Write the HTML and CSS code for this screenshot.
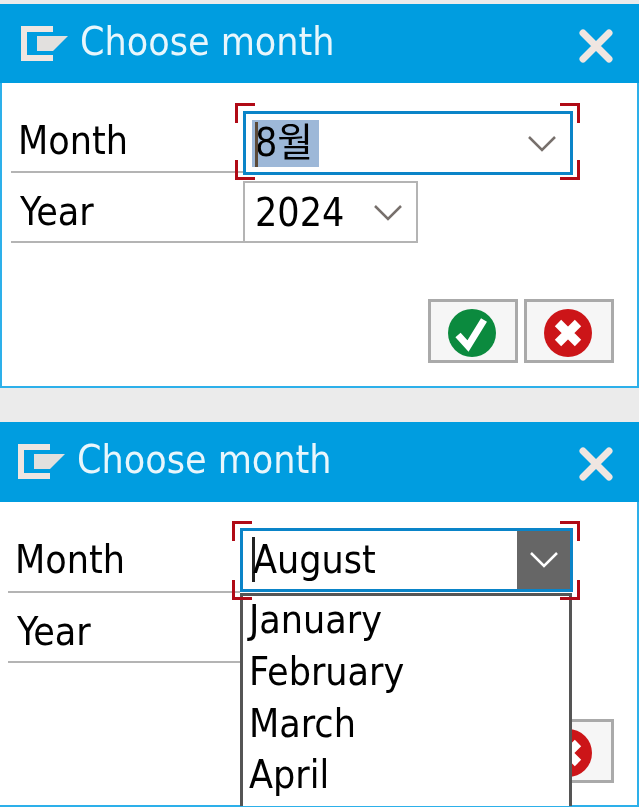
FILE: index.html
```html
<!DOCTYPE html>
<html lang="en">
<head>
    <meta charset="UTF-8"/>
    <title>Choose month</title>
    <link rel="stylesheet" href="styles.css">
</head>
<body>

<div class="dialog">
    <div class="title_bar">
        <svg class="title_icon" width="48" height="36" viewBox="0 0 48 36">
            <path d="M0 0H32V6H6V29H32V35H0Z" fill="#efe6e1"/>
            <path d="M16 10H47L32 25H16Z" fill="#e2e0de"/>
        </svg>
        <span class="title_text">Choose month</span>
        <svg class="close_icon" width="34" height="34" viewBox="0 0 34 34">
            <path d="M4 4L30 30M30 4L4 30" stroke="#efe6e1" stroke-width="7" stroke-linecap="round"/>
        </svg>
    </div>
    <div class="form">
        <div class="row row_month">
            <div class="row_label">Month</div>
            <div class="field field_focus">
                <span class="selected_text"><span class="caret"></span>8월</span>
                <svg class="chevron" width="28" height="16" viewBox="0 0 28 16">
                    <path d="M1 1L14 14L27 1" fill="none" stroke="#77706c" stroke-width="2.5"/>
                </svg>
                <i class="corner corner_tl"></i><i class="corner corner_tr"></i>
                <i class="corner corner_bl"></i><i class="corner corner_br"></i>
            </div>
        </div>
        <div class="row row_year">
            <div class="row_label row_label_year">Year</div>
            <div class="field field_year">
                <span>2024</span>
                <svg class="chevron" width="28" height="16" viewBox="0 0 28 16">
                    <path d="M1 1L14 14L27 1" fill="none" stroke="#77706c" stroke-width="2.5"/>
                </svg>
            </div>
        </div>
    </div>
    <div class="buttons">
        <div class="icon_button">
            <svg width="48" height="48" viewBox="0 0 48 48">
                <circle cx="24" cy="24" r="24" fill="#0b8a3e"/>
                <path d="M10 26L20 37L36 11" fill="none" stroke="#fff" stroke-width="7"/>
            </svg>
        </div>
        <div class="icon_button">
            <svg width="48" height="48" viewBox="0 0 48 48">
                <circle cx="24" cy="24" r="24" fill="#cc1518"/>
                <path d="M14 14L34 34M34 14L14 34" stroke="#fff" stroke-width="9"/>
            </svg>
        </div>
    </div>
</div>

<div class="dialog dialog_open">
    <div class="title_bar">
        <svg class="title_icon" width="48" height="36" viewBox="0 0 48 36">
            <path d="M0 0H32V6H6V29H32V35H0Z" fill="#efe6e1"/>
            <path d="M16 10H47L32 25H16Z" fill="#e2e0de"/>
        </svg>
        <span class="title_text">Choose month</span>
        <svg class="close_icon" width="34" height="34" viewBox="0 0 34 34">
            <path d="M4 4L30 30M30 4L4 30" stroke="#efe6e1" stroke-width="7" stroke-linecap="round"/>
        </svg>
    </div>
    <div class="form">
        <div class="row row_month">
            <div class="row_label">Month</div>
            <div class="field field_focus">
                <span class="caret caret_open"></span><span>August</span>
                <div class="arrow_box">
                    <svg width="28" height="16" viewBox="0 0 28 16">
                        <path d="M1 1L14 14L27 1" fill="none" stroke="#fff" stroke-width="2.5"/>
                    </svg>
                </div>
                <ul class="dropdown">
                    <li>January</li>
                    <li>February</li>
                    <li>March</li>
                    <li>April</li>
                </ul>
                <i class="corner corner_tl"></i><i class="corner corner_tr"></i>
                <i class="corner corner_bl"></i><i class="corner corner_br"></i>
            </div>
        </div>
        <div class="row row_year">
            <div class="row_label row_label_year">Year</div>
        </div>
    </div>
    <div class="buttons">
        <div class="icon_button"></div>
        <div class="icon_button">
            <svg width="48" height="48" viewBox="0 0 48 48">
                <circle cx="24" cy="24" r="24" fill="#cc1518"/>
                <path d="M14 14L34 34M34 14L14 34" stroke="#fff" stroke-width="9"/>
            </svg>
        </div>
    </div>
</div>

</body>
</html>
```

FILE: styles.css
```css
html, body {
    height: 807px;
    overflow: hidden;
}

body {
    margin: 0;
    background-color: #ebebeb;
    font-family: 'DejaVu Sans Condensed', 'Liberation Sans', 'Noto Sans CJK KR', sans-serif;
    font-size: 39px;
    color: #000;
}

.dialog {
    box-sizing: border-box;
    width: 639px;
    height: 384px;
    margin-top: 4px;
    background-color: #fff;
    border: 2px solid #2db0ea;
    border-top: none;
    filter: blur(0.6px);
}

.dialog_open {
    width: 642px;
    height: 385px;
    margin-top: 34px;
    margin-left: -3px;
}

.title_bar {
    display: flex;
    align-items: center;
    height: 79px;
    margin: 0 -2px;
    padding: 0 26px 0 21px;
    background-color: #009de0;
    color: #e8f6fc;
}

.dialog_open .title_bar {
    height: 80px;
}

.title_icon {
    margin-right: 11px;
}

.title_text {
    flex: 1;
    margin-top: -5px;
}

.close_icon {
    margin-top: 4px;
}

.form {
    padding: 22px 0 0 9px;
}

.dialog_open .form {
    padding-top: 23px;
}

.row {
    display: flex;
}

.row_month {
    height: 68px;
}

.row_year {
    height: 70px;
}

.row_label {
    box-sizing: border-box;
    width: 232px;
    padding: 13px 0 0 7px;
    border-bottom: 2px solid #b4b4b4;
}

.dialog_open .row_month .row_label {
    padding-top: 12px;
}

.row_label_year {
    padding-top: 16px;
    padding-left: 9px;
}

.field {
    position: relative;
    box-sizing: border-box;
    display: flex;
    align-items: center;
}

.field_focus {
    width: 330px;
    height: 64px;
    margin-top: 6px;
    padding-left: 6px;
    border: 3px solid #0a84c8;
}

.dialog_open .field_focus {
    width: 333px;
    margin-top: 3px;
    padding-left: 9px;
    padding-bottom: 2px;
}

.field_year {
    width: 175px;
    height: 62px;
    margin-top: 8px;
    padding-left: 10px;
    border: 2px solid #b4b4b4;
}

.selected_text {
    position: relative;
    display: block;
    width: 67px;
    height: 47px;
    line-height: 46px;
    padding-left: 3px;
    box-sizing: border-box;
    background-color: #9db8d8;
    font-family: 'DejaVu Sans Condensed', 'Noto Sans CJK KR', sans-serif;
}

.caret {
    position: absolute;
    left: 3px;
    top: 2px;
    width: 3px;
    height: 45px;
    background-color: #5c4a38;
}

.caret_open {
    position: static;
    margin-right: -2px;
    background-color: #222;
    flex-shrink: 0;
}

.chevron {
    position: absolute;
    right: 14px;
    top: 22px;
}

.arrow_box {
    display: flex;
    align-items: center;
    justify-content: center;
    position: absolute;
    top: 0;
    right: 0;
    width: 53px;
    height: 100%;
    background-color: #666;
}

.dropdown {
    position: absolute;
    left: -3px;
    top: 62px;
    box-sizing: border-box;
    width: 332px;
    height: 213px;
    margin: 0;
    padding: 0 0 0 6px;
    list-style: none;
    background-color: #fff;
    border: 3px solid #555;
    border-bottom: none;
}

.dropdown li {
    height: 51.8px;
    line-height: 47.5px;
}

.corner {
    position: absolute;
    width: 20px;
    height: 20px;
    box-sizing: border-box;
    border: 0 solid #b00a16;
}

.corner_tl {
    left: -11px;
    top: -11px;
    border-width: 3px 0 0 3px;
}

.corner_tr {
    right: -10px;
    top: -11px;
    border-width: 3px 3px 0 0;
}

.corner_bl {
    left: -11px;
    bottom: -8px;
    border-width: 0 0 3px 3px;
}

.corner_br {
    right: -10px;
    bottom: -8px;
    border-width: 0 3px 3px 0;
}

.dialog_open .corner_tl,
.dialog_open .corner_tr {
    top: -10px;
}

.dialog_open .corner_bl,
.dialog_open .corner_br {
    bottom: -11px;
}

.buttons {
    display: flex;
    justify-content: flex-end;
    gap: 6px;
    margin-top: 56px;
    padding-right: 23px;
}

.icon_button {
    box-sizing: border-box;
    display: flex;
    align-items: center;
    justify-content: center;
    width: 90px;
    height: 64px;
    background-color: #f6f6f6;
    border: 3px solid #aaa;
}

.icon_button svg {
    margin: 3px 0 0 -3px;
}
```
